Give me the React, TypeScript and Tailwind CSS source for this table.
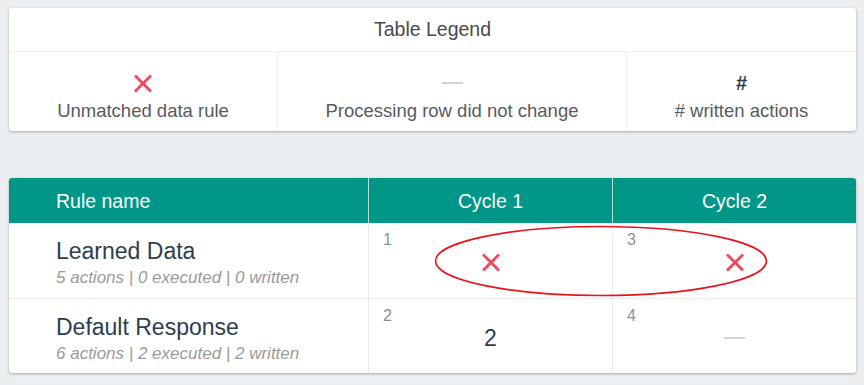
import React from "react";

type Cell = { step: number; kind: "miss" | "same" | "count"; value?: number };

type Rule = { name: string; actions: number; executed: number; written: number; cells: Cell[] };

const rules: Rule[] = [
  {
    name: "Learned Data",
    actions: 5,
    executed: 0,
    written: 0,
    cells: [
      { step: 1, kind: "miss" },
      { step: 3, kind: "miss" },
    ],
  },
  {
    name: "Default Response",
    actions: 6,
    executed: 2,
    written: 2,
    cells: [
      { step: 2, kind: "count", value: 2 },
      { step: 4, kind: "same" },
    ],
  },
];

function Cross() {
  return (
    <svg width="20" height="19" viewBox="0 0 20 19" className="block">
      <path d="M2 1.5 L18 17.5 M18 1.5 L2 17.5" stroke="#f4475a" strokeWidth="2.8" strokeLinecap="butt" />
    </svg>
  );
}

function Dash() {
  return <div className="w-[21px] h-[2px] bg-[#d3d3d3]" />;
}

function CellContent({ cell }: { cell: Cell }) {
  if (cell.kind === "miss") return <Cross />;
  if (cell.kind === "same") return <Dash />;
  return <span className="text-[23px] leading-[26px] text-[#2c3e50]">{cell.value}</span>;
}

function Legend() {
  const items = [
    { icon: <Cross />, label: "Unmatched data rule" },
    { icon: <Dash />, label: "Processing row did not change" },
    {
      icon: <span className="text-[20px] font-bold leading-[18px] text-[#2c3e50]">#</span>,
      label: "# written actions",
    },
  ];
  return (
    <div className="w-[847px] bg-white rounded-[3px] shadow-[0_1px_3px_rgba(0,0,0,0.3)]">
      <div className="h-[44px] flex items-center justify-center border-b border-[#eef0f1] text-[19.5px] text-[#4a4a4a]">
        Table Legend
      </div>
      <div className="grid grid-cols-[268px_349px_1fr] h-[79px]">
        {items.map((it, i) => (
          <div
            key={i}
            className={`flex flex-col items-center pt-[22px] ${i > 0 ? "border-l border-[#eef0f1]" : ""}`}
          >
            <div className="h-[18px] flex items-center justify-center">{it.icon}</div>
            <div className="mt-[8px] text-[18.5px] leading-[22px] text-[#555b60]">{it.label}</div>
          </div>
        ))}
      </div>
    </div>
  );
}

function RulesTable() {
  return (
    <div className="relative w-[847px] bg-white rounded-[3px] shadow-[0_1px_3px_rgba(0,0,0,0.3)]">
      <div className="grid grid-cols-[359px_244px_1fr] h-[45px] bg-[#009688] text-white text-[19.5px] rounded-t-[3px]">
        <div className="flex items-center pl-[47px] pt-[2px]">Rule name</div>
        <div className="flex items-center justify-center pt-[2px] border-l border-[#b8ded9]">Cycle 1</div>
        <div className="flex items-center justify-center pt-[2px] border-l border-[#b8ded9]">Cycle 2</div>
      </div>
      {rules.map((r, ri) => (
        <div
          key={r.name}
          className={`grid grid-cols-[359px_244px_1fr] h-[75px] ${ri > 0 ? "border-t border-[#eceff1]" : ""}`}
        >
          <div className="pl-[47px] pt-[15px]">
            <div className="text-[23px] leading-[26px] text-[#2c3e50]">{r.name}</div>
            <div className="mt-[4px] text-[17px] leading-[20px] italic text-[#9a9a9a]">
              {r.actions} actions | {r.executed} executed | {r.written} written
            </div>
          </div>
          {r.cells.map((c) => (
            <div
              key={c.step}
              className="relative flex items-center justify-center pt-[3px] border-l border-[#e6ebec]"
            >
              <span className="absolute left-[14px] top-[8px] text-[16px] leading-[18px] text-[#84939c]">
                {c.step}
              </span>
              <CellContent cell={c} />
            </div>
          ))}
        </div>
      ))}
      {/* highlight ring around the unmatched row */}
      <svg
        className="absolute left-[425px] top-[46px] pointer-events-none"
        width="334"
        height="74"
        viewBox="0 0 334 74"
      >
        <ellipse cx="167" cy="37" rx="165.5" ry="34.5" fill="none" stroke="#e8141c" strokeWidth="1.6" />
      </svg>
    </div>
  );
}

export default function App() {
  return (
    <div
      className="w-[864px] h-[385px] bg-[#eceff1] pl-[9px] pt-[8px] overflow-hidden"
      style={{ fontFamily: '"Liberation Sans", Arial, sans-serif' }}
    >
      <Legend />
      <div className="mt-[47px]">
        <RulesTable />
      </div>
    </div>
  );
}
